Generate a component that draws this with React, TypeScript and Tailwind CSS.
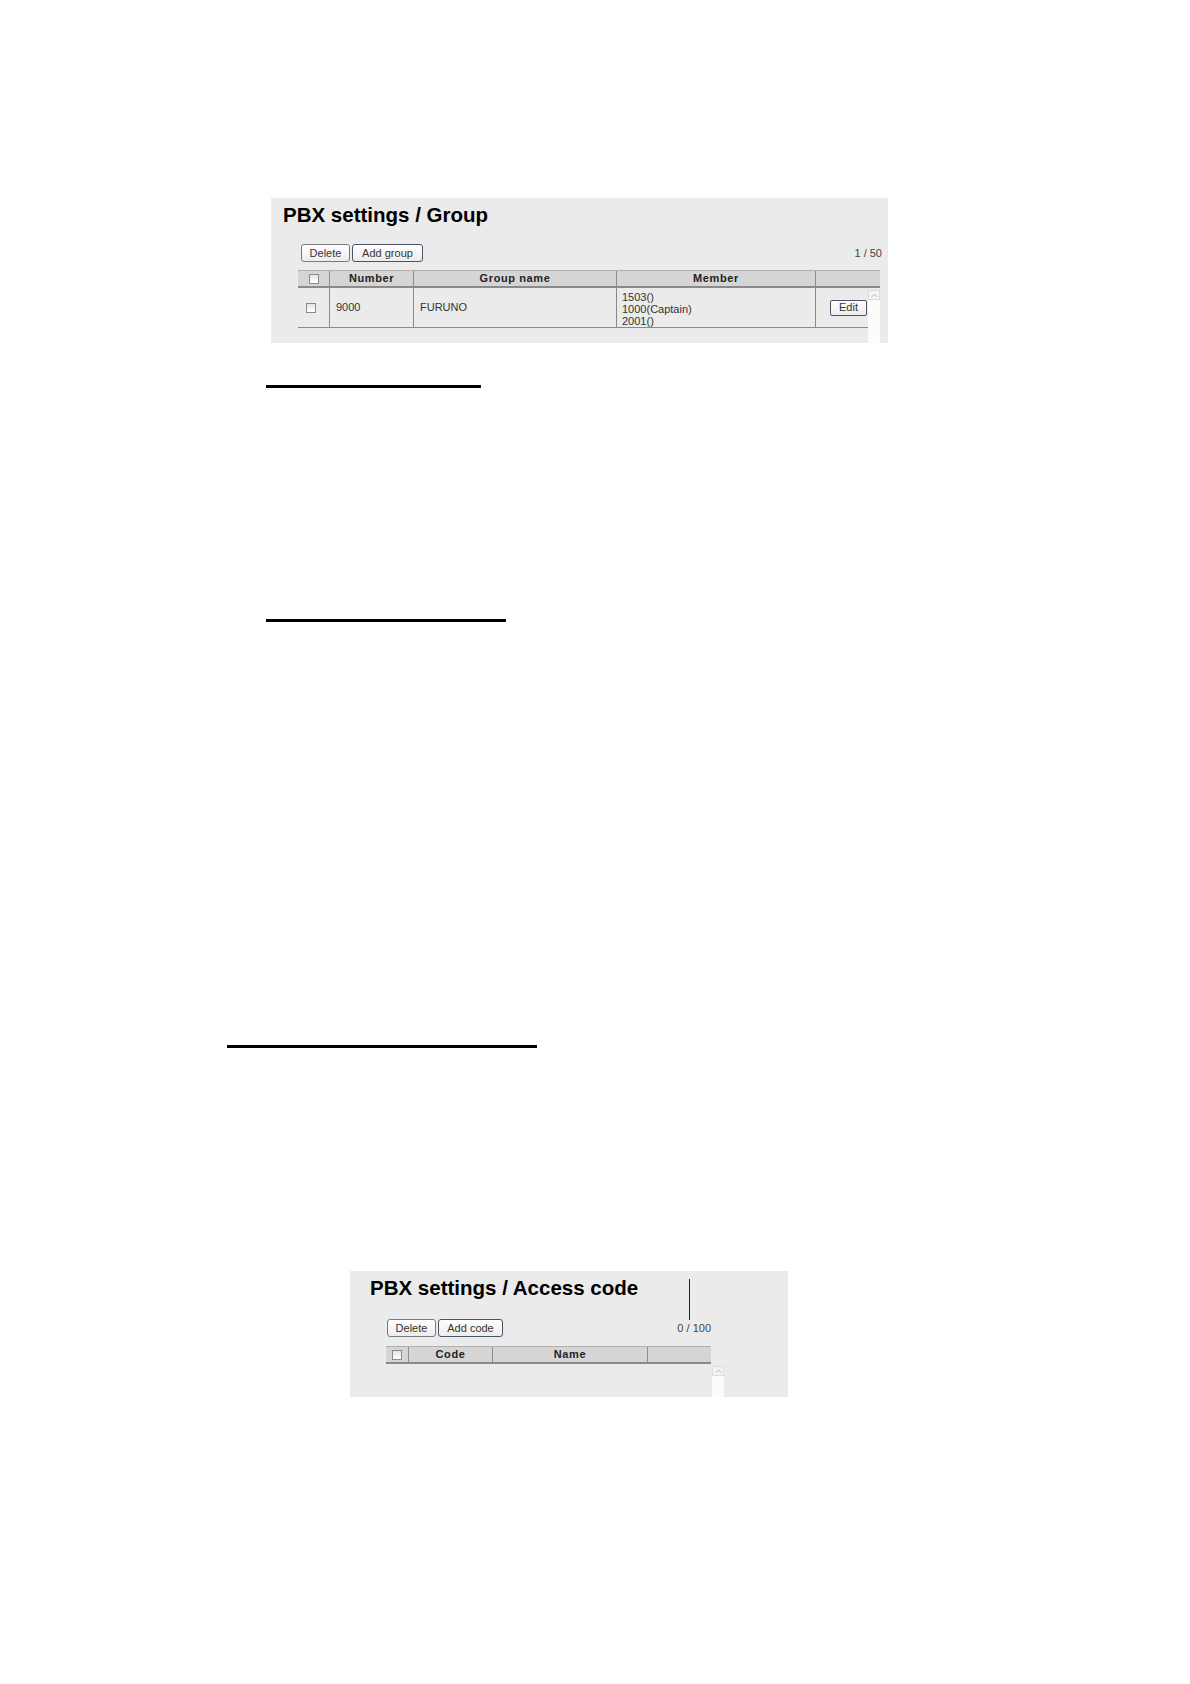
import React from 'react';

function Checkbox() {
  return <div className="w-[10px] h-[10px] border border-[#8a8a8a] bg-gradient-to-b from-[#e6e6e6] to-white" />;
}

function Button({ label, width, dark }: { label: string; width: string; dark?: boolean }) {
  return (
    <div
      className={`${width} h-[18px] flex items-center justify-center rounded-[3px] border bg-gradient-to-b from-white to-[#ececec] text-[11px] text-[#333] ${
        dark ? 'border-[#4a5468]' : 'border-[#7a7a7a]'
      }`}
    >
      {label}
    </div>
  );
}

function Scrollbar({ className }: { className: string }) {
  return (
    <div className={`${className} bg-[#fcfcfc] flex flex-col`}>
      <div className="h-[10px] w-full border border-[#dcdcdc] bg-[#f4f4f4] flex items-center justify-center">
        <svg width="7" height="5" viewBox="0 0 7 5">
          <path d="M0.5 4 L3.5 1 L6.5 4" fill="none" stroke="#b8b8b8" strokeWidth="1" />
        </svg>
      </div>
    </div>
  );
}

function HeaderCell({ w, children, last }: { w: string; children?: React.ReactNode; last?: boolean }) {
  return (
    <div
      className={`${w} h-full flex items-center justify-center text-[11px] font-bold tracking-[0.6px] text-[#222] ${
        last ? '' : 'border-r border-[#8c8c8c]'
      }`}
    >
      {children}
    </div>
  );
}

function GroupPanel() {
  return (
    <div className="ml-[271px] mt-[198px] w-[617px] h-[145px] bg-[#ebebeb] pt-[5px]">
      <div className="pl-[12px] text-[20.5px] leading-[24px] font-bold text-black">PBX settings / Group</div>
      <div className="ml-[27px] w-[584px]">
        <div className="mt-[17px] flex items-center h-[18px]">
          <div className="pl-[3px] flex gap-[2px]">
            <Button label="Delete" width="w-[49px]" />
            <Button label="Add group" width="w-[71px]" dark />
          </div>
          <div className="ml-auto text-[11px] text-[#444]">1 / 50</div>
        </div>
        <div className="mt-[8px] w-[582px] h-[18px] flex bg-[#d5d5d5] border-t border-[#b0b0b0] border-b-2 border-b-[#8a8a8a]">
          <HeaderCell w="w-[32px]">
            <Checkbox />
          </HeaderCell>
          <HeaderCell w="w-[84px]">Number</HeaderCell>
          <HeaderCell w="w-[203px]">Group name</HeaderCell>
          <HeaderCell w="w-[199px]">Member</HeaderCell>
          <HeaderCell w="w-[64px]" last />
        </div>
        <div className="w-[582px] flex">
          <div className="w-[570px]">
            <div className="h-[40px] flex border-b border-[#8a8a8a] text-[11px] text-[#333]">
              <div className="w-[32px] border-r border-[#8a8a8a] flex items-center pl-[8px]">
                <Checkbox />
              </div>
              <div className="w-[84px] border-r border-[#8a8a8a] flex items-center pl-[6px]">9000</div>
              <div className="w-[203px] border-r border-[#8a8a8a] flex items-center pl-[6px]">FURUNO</div>
              <div className="w-[199px] border-r border-[#8a8a8a] pl-[5px] pt-[3px] leading-[12px]">
                <div>1503()</div>
                <div>1000(Captain)</div>
                <div>2001()</div>
              </div>
              <div className="w-[52px] flex items-center justify-end pr-[1px]">
                <div className="w-[37px] h-[16px] flex items-center justify-center rounded-[2px] border border-[#4a5468] bg-gradient-to-b from-white to-[#ececec] text-[11px] text-[#333]">
                  Edit
                </div>
              </div>
            </div>
          </div>
          <Scrollbar className="w-[12px] h-[53px] mt-[2px]" />
        </div>
      </div>
    </div>
  );
}

function AccessCodePanel() {
  return (
    <div className="relative ml-[350px] mt-[223px] w-[438px] h-[126px] bg-[#ebebeb] pt-[5px]">
      <div className="absolute left-[339px] top-[8px] w-px h-[41px] bg-[#222]" />
      <div className="pl-[20px] text-[20.5px] leading-[24px] font-bold text-black">PBX settings / Access code</div>
      <div className="ml-[36px] w-[338px]">
        <div className="mt-[19px] w-[325px] flex items-center h-[18px]">
          <div className="pl-[1px] flex gap-[2px]">
            <Button label="Delete" width="w-[49px]" />
            <Button label="Add code" width="w-[65px]" dark />
          </div>
          <div className="ml-auto text-[11px] text-[#444]">0 / 100</div>
        </div>
        <div className="mt-[9px] w-[325px] h-[18px] flex bg-[#d5d5d5] border-t border-[#b0b0b0] border-b-2 border-b-[#8a8a8a]">
          <HeaderCell w="w-[23px]">
            <Checkbox />
          </HeaderCell>
          <HeaderCell w="w-[84px]">Code</HeaderCell>
          <HeaderCell w="w-[155px]">Name</HeaderCell>
          <HeaderCell w="w-[63px]" last />
        </div>
        <div className="flex">
          <div className="w-[326px]" />
          <Scrollbar className="w-[12px] h-[31px] mt-[2px]" />
        </div>
      </div>
    </div>
  );
}

export default function App() {
  return (
    <div className="w-[1190px] min-h-[1684px] bg-white overflow-hidden font-['Liberation_Sans',Arial,sans-serif]">
      <GroupPanel />
      <div className="ml-[266px] mt-[42px] w-[215px] h-[3px] bg-black" />
      <div className="ml-[266px] mt-[231px] w-[240px] h-[3px] bg-black" />
      <div className="ml-[227px] mt-[423px] w-[310px] h-[3px] bg-black" />
      <AccessCodePanel />
    </div>
  );
}
